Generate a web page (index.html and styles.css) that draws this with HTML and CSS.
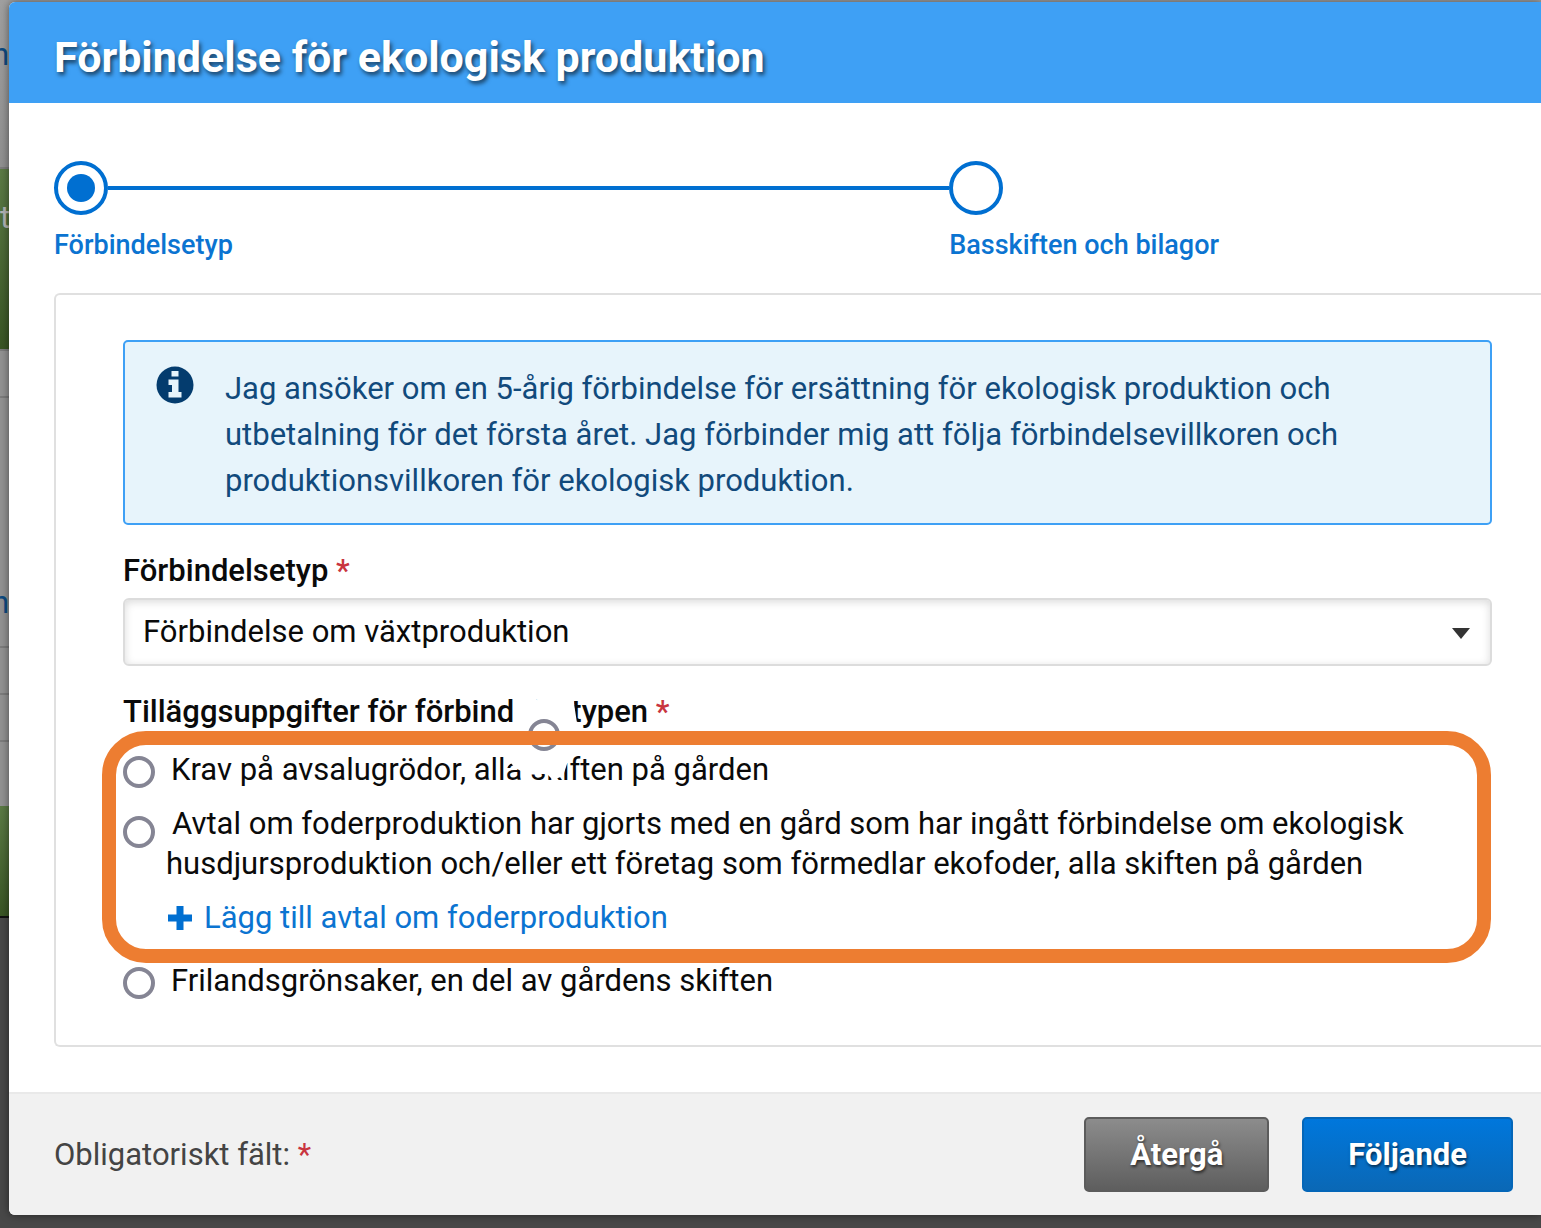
FILE: index.html
```html
<!DOCTYPE html>
<html lang="sv">
<head>
    <meta charset="UTF-8">
    <meta name="viewport" content="width=device-width, initial-scale=1.0">
    <title>Förbindelse för ekologisk produktion</title>
    <link rel="stylesheet" href="styles.css">
</head>
<body>
    <!-- Dimmed page behind the dialog -->
    <div class="backdrop" aria-hidden="true">
        <div class="strip strip-top">ne</div>
        <div class="strip strip-green">t</div>
        <div class="strip strip-row"></div>
        <div class="strip strip-text">n</div>
        <div class="strip strip-row"></div>
        <div class="strip strip-row"></div>
        <div class="strip strip-gap"></div>
        <div class="strip strip-green-small"></div>
    </div>

    <main class="dialog">
        <header class="dialog-header">
            <h1>Förbindelse för ekologisk produktion</h1>
        </header>

        <div class="dialog-body">
            <ol class="steps">
                <li class="step active">
                    <span class="step-track"><span class="step-circle"></span></span>
                    <span class="step-label">Förbindelsetyp</span>
                </li>
                <li class="step">
                    <span class="step-track"><span class="step-circle"></span></span>
                    <span class="step-label">Basskiften och bilagor</span>
                </li>
            </ol>

            <form class="panel" id="commitmentForm">
                <div class="info">
                    <svg class="info-icon" viewBox="0 0 38 38" aria-hidden="true">
                        <circle cx="19" cy="19" r="18.5" fill="#043c6e"/>
                        <path fill="#e7f4fb" d="M15.500 5h7v5.500h-7zM12.500 13.500h10v12.500h3v5.500h-13V26h3.500v-7h-3.500z"/>
                    </svg>
                    <p>Jag ansöker om en 5-årig förbindelse för ersättning för ekologisk produktion och utbetalning för det första året. Jag förbinder mig att följa förbindelsevillkoren och produktionsvillkoren för ekologisk produktion.</p>
                </div>

                <label class="field-label" for="type">Förbindelsetyp <span class="required">*</span></label>
                <div class="select-wrap">
                    <select id="type">
                        <option>Förbindelse om växtproduktion</option>
                    </select>
                </div>

                <fieldset class="details">
                    <legend class="field-label">Tilläggsuppgifter för förbindelsetypen <span class="required">*</span></legend>
                    <div class="highlighted">
                        <div class="option">
                            <input type="radio" name="details" id="sale">
                            <label for="sale">Krav på avsalugrödor, alla skiften på gården</label>
                        </div>
                        <div class="option option-long">
                            <input type="radio" name="details" id="feed">
                            <label for="feed">Avtal om foderproduktion har gjorts med en gård som har ingått förbindelse om ekologisk<br>husdjursproduktion och/eller ett företag som förmedlar ekofoder, alla skiften på gården</label>
                        </div>
                        <a class="add-link" href="#">
                            <svg viewBox="0 0 26 26" aria-hidden="true"><path fill="#006fd1" d="M9.500 1h7v8.500H25v7h-8.500V25h-7v-8.500H1v-7h8.500z"/></svg>
                            Lägg till avtal om foderproduktion
                        </a>
                        <!-- Loose radio with its white patch, under the frame -->
                        <svg class="patch" viewBox="0 0 84 88" aria-hidden="true">
                            <path fill="#fff" d="M15 0L34 0L37 4L42 6L43 0L72 0L76 26L75 32L70 60L66 67L62 79L52 83L46 77L32 77L30 72L22 75L14 71L10 66L6 70L4 56L12 30Z"/>
                            <circle cx="43" cy="38" r="14" fill="#fff" stroke="#858594" stroke-width="4"/>
                        </svg>
                        <div class="frame"></div>
                    </div>
                    <div class="option">
                        <input type="radio" name="details" id="vegetables">
                        <label for="vegetables">Frilandsgrönsaker, en del av gårdens skiften</label>
                    </div>
                </fieldset>
            </form>
        </div>

        <footer class="dialog-footer">
            <span class="footer-note">Obligatoriskt fält: <span class="required">*</span></span>
            <button type="button" class="btn btn-back">Återgå</button>
            <button type="submit" form="commitmentForm" class="btn btn-next">Följande</button>
        </footer>
    </main>
</body>
</html>
```
FILE: styles.css
```css
* {
    box-sizing: border-box;
}
body {
    margin: 0;
    padding: 2px 0 13px 9px;
    background-color: #484848;
    font-family: Roboto, "Liberation Sans", sans-serif;
    font-size: 31px;
    color: #0a0a0a;
    overflow-x: hidden;
}
h1, p, ol {
    margin: 0;
    padding: 0;
}
/* page behind */
.backdrop {
    position: absolute;
    top: 0;
    left: 0;
    right: 0;
    overflow: hidden;
}
.strip {
    color: #0d4a80;
    background-color: #929292;
    border-bottom: 2px solid #7c7c7c;
    overflow: hidden;
}
.strip-top {
    height: 169px;
    padding-top: 36px;
    background: linear-gradient(#a0a0a0, #909090);
    text-indent: -8px;
}
.strip-green {
    height: 182px;
    padding-top: 30px;
    color: #b5b5b5;
    background: linear-gradient(#5b7a45, #395524);
}
.strip-row {
    height: 47px;
}
.strip-text {
    height: 250px;
    padding-top: 186px;
    text-indent: -8px;
}
.strip-gap {
    height: 64px;
    border: none;
}
.strip-green-small {
    height: 112px;
    background: linear-gradient(#5b7a45, #395524);
    border-bottom: 2px solid #111;
}
/* dialog */
.dialog {
    position: relative;
    background-color: #fff;
    border-radius: 6px 0 0 6px;
    box-shadow: 0 0 8px rgba(0, 0, 0, 0.5);
    overflow: hidden;
}
.dialog-header {
    padding: 30px 45px 21px;
    background-color: #3ea0f5;
}
h1 {
    color: #fff;
    font-size: 43px;
    line-height: 50px;
    text-shadow: 2px 3px 4px rgba(0, 0, 0, 0.6);
}
.dialog-body {
    padding: 58px 0 45px 45px;
}
.steps {
    display: grid;
    grid-template-columns: 60.2% 1fr;
    margin-bottom: 32px;
    list-style: none;
}
.step-track {
    display: flex;
    align-items: center;
}
.step-circle {
    display: flex;
    width: 54px;
    height: 54px;
    border: 4px solid #006fd1;
    border-radius: 50%;
}
.active .step-circle::before {
    content: "";
    width: 28px;
    height: 28px;
    margin: auto;
    border-radius: 50%;
    background-color: #006fd1;
}
.active .step-track::after {
    content: "";
    flex: 1;
    height: 4px;
    background-color: #006fd1;
}
.step-label {
    display: block;
    margin-top: 14px;
    color: #0b74d1;
    font-size: 27px;
    font-weight: 500;
    line-height: 32px;
}
.panel {
    padding: 45px 49px 46px 67px;
    border: 2px solid #e0e0e0;
    border-right: none;
    border-radius: 6px 0 0 6px;
}
.info {
    display: flex;
    gap: 31px;
    padding: 24px 80px 19px 31px;
    background-color: #e7f4fb;
    border: 2px solid #3ea0f5;
    border-radius: 5px;
    color: #114a7c;
    line-height: 46px;
}
.info-icon {
    flex: none;
    width: 38px;
    height: 38px;
}
.field-label {
    display: block;
    padding: 0;
    font-weight: 500;
    line-height: 36px;
}
.info + .field-label {
    margin: 28px 0 9px;
}
.required {
    color: #c9353f;
}
.select-wrap {
    position: relative;
    margin-bottom: 28px;
}
.select-wrap::after {
    content: "";
    position: absolute;
    top: 30px;
    right: 22px;
    border: 9px solid transparent;
    border-top: 11px solid #333;
    border-bottom: none;
    pointer-events: none;
}
select {
    display: block;
    width: 100%;
    height: 68px;
    padding: 0 60px 2px 18px;
    appearance: none;
    background-color: #fff;
    border: 2px solid #dcdcdc;
    border-radius: 6px;
    box-shadow: inset 0 2px 8px rgba(0, 0, 0, 0.15);
    color: inherit;
    font: inherit;
}
.details {
    min-width: 0;
    margin: 0;
    padding: 0;
    border: none;
}
.highlighted {
    position: relative;
    padding: 22px 0 27px;
}
.option {
    display: flex;
    align-items: center;
    gap: 16px;
    line-height: 36px;
}
.option-long {
    align-items: flex-start;
    gap: 11px;
    margin-top: 16px;
    line-height: 40px;
}
.option-long label {
    text-indent: 6px;
    white-space: nowrap;
}
.option-long input {
    margin-top: 12px;
}
input[type="radio"] {
    flex: none;
    width: 32px;
    height: 32px;
    margin-left: 0;
    margin-right: 0;
    appearance: none;
    background-color: #fff;
    border: 4px solid #858594;
    border-radius: 50%;
}
input[type="radio"]:checked {
    background-color: #006fd1;
}
.add-link {
    display: flex;
    align-items: center;
    gap: 11px;
    width: max-content;
    margin: 16px 0 0 44px;
    color: #0b74d1;
    line-height: 36px;
    text-decoration: none;
}
.add-link svg {
    width: 26px;
    height: 26px;
}
.patch {
    position: absolute;
    top: -33px;
    left: 378px;
    width: 84px;
    height: 88px;
}
.frame {
    position: absolute;
    top: 1px;
    bottom: 0;
    left: -21px;
    right: 1px;
    border: 14px solid #ed7d31;
    border-radius: 44px;
    pointer-events: none;
}
/* footer */
.dialog-footer {
    display: flex;
    align-items: center;
    gap: 33px;
    padding: 23px 28px 23px 45px;
    background-color: #f1f1f1;
    border-top: 2px solid #e9e9e9;
}
.footer-note {
    margin-right: auto;
    color: #444;
}
.btn {
    height: 75px;
    padding: 0 44px;
    border: 2px solid;
    border-radius: 5px;
    color: #fff;
    font: inherit;
    font-weight: 700;
    text-shadow: 1px 2px 3px rgba(0, 0, 0, 0.6);
    cursor: pointer;
}
.btn-back {
    background: linear-gradient(#8c8c8c, #5e5e5e);
    border-color: #5c5c5c;
}
.btn-next {
    background: linear-gradient(#0077dc, #0a68b6);
    border-color: #0466b8;
}
```
